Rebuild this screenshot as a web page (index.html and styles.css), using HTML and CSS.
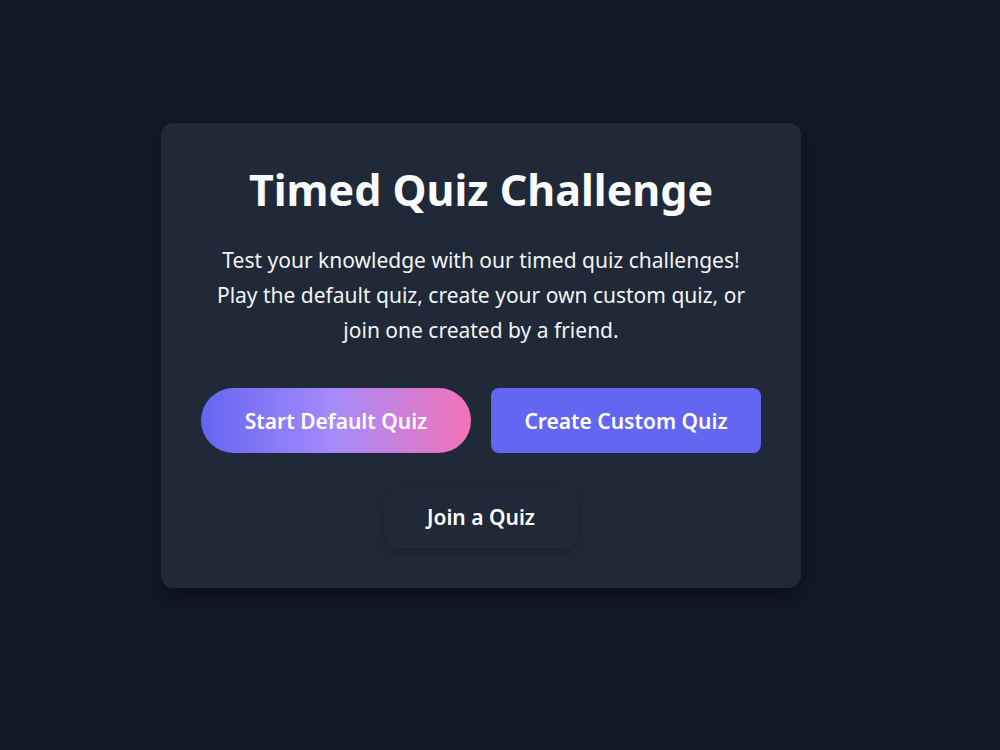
FILE: index.html
```html
<!DOCTYPE html>
<html lang="en">
<head>
<meta charset="utf-8">
<title>Timed Quiz Challenge</title>
<link rel="stylesheet" href="styles.css">
</head>
<body>
<main class="page">
  <section class="card">
    <h1 class="title">Timed Quiz Challenge</h1>
    <p class="intro">Test your knowledge with our timed quiz challenges! Play the default quiz, create your own custom quiz, or join one created by a friend.</p>
    <div class="actions">
      <button class="btn btn-gradient">Start Default Quiz</button>
      <button class="btn btn-primary">Create Custom Quiz</button>
    </div>
    <button class="btn btn-ghost">Join a Quiz</button>
  </section>
</main>
</body>
</html>
```

FILE: styles.css
```css
* {
  box-sizing: border-box;
}

html,
body {
  margin: 0;
  height: 100%;
}

body {
  background: #111827;
  color: #f9fafb;
  font-family: "Noto Sans", "Open Sans", sans-serif;
}

.page {
  min-height: 100%;
  display: flex;
  align-items: center;
  justify-content: center;
  padding: 0 38px 39px 0;
}

.card {
  width: 640px;
  background: #1f2937;
  border-radius: 12px;
  padding: 40px;
  display: flex;
  flex-direction: column;
  align-items: center;
  text-align: center;
  box-shadow: 0 10px 20px rgba(0, 0, 0, 0.35);
}

.title {
  margin: 3px 0 29px;
  font-size: 43px;
  line-height: 48px;
  font-weight: 700;
  color: #f9fafb;
}

.intro {
  margin: 0 0 40px;
  font-size: 21px;
  line-height: 35px;
  color: #f3f4f6;
  max-width: 555px;
}

.actions {
  display: flex;
  gap: 20px;
  width: 100%;
  margin-bottom: 35px;
}

.btn {
  font-family: inherit;
  font-size: 21px;
  font-weight: 600;
  color: #ffffff;
  border: none;
  cursor: pointer;
}

.actions .btn {
  flex: 1;
  height: 65px;
}

.btn-gradient {
  border-radius: 33px;
  background: linear-gradient(90deg, #6366f1, #a78bfa 50%, #f472b6);
}

.btn-primary {
  border-radius: 8px;
  background: #6366f1;
}

.btn-ghost {
  height: 60px;
  width: 192px;
  padding-bottom: 3px;
  border-radius: 12px;
  background: #1f2937;
  box-shadow: 0 4px 10px rgba(0, 0, 0, 0.18);
}
```
